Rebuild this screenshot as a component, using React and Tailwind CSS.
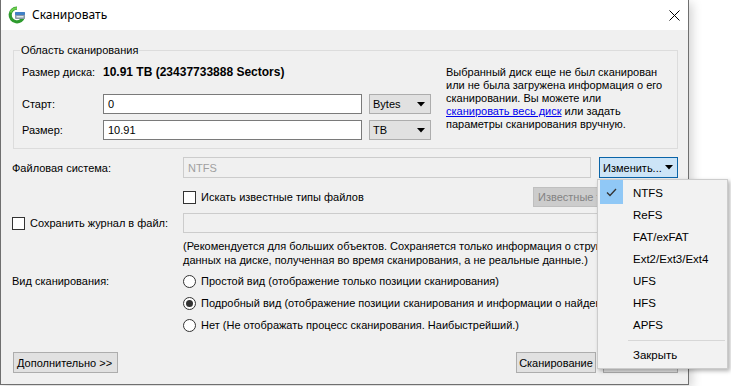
import React from "react";

function Arrow({ className = "" }) {
  return (
    <svg width="8" height="5" viewBox="0 0 8 5" className={className}>
      <path d="M0 0H8L4 4.5Z" fill="#000" />
    </svg>
  );
}

function Checkbox() {
  return <span className="inline-block w-[13px] h-[13px] border border-[#333333] bg-white shrink-0" />;
}

function Radio({ checked }) {
  return (
    <span className="w-[13px] h-[13px] rounded-full border border-[#333333] bg-white shrink-0 flex items-center justify-center">
      {checked && <span className="w-[7px] h-[7px] rounded-full bg-[#333333]" />}
    </span>
  );
}

function Btn({ children, className = "" }) {
  return (
    <div className={`h-[21px] border border-[#adadad] bg-[#e1e1e1] flex items-center justify-center ${className}`}>
      {children}
    </div>
  );
}

function AppIcon() {
  return (
    <svg width="18" height="18" viewBox="0 0 18 18">
      <path d="M9 2.2A6.8 6.8 0 1 0 15.6 10.5" fill="none" stroke="#2e9b2e" strokeWidth="3.2" />
      <path d="M9 2.2A6.8 6.8 0 0 0 2.6 6.5" fill="none" stroke="#6fcf4f" strokeWidth="2" />
      <rect x="7" y="6" width="10" height="7" rx="1" fill="#8a9aa8" />
      <rect x="7" y="6" width="10" height="3" rx="1" fill="#3f7fc6" />
      <rect x="8.5" y="10" width="7" height="1.5" fill="#dfe6ec" />
    </svg>
  );
}

const menuItems = ["NTFS", "ReFS", "FAT/exFAT", "Ext2/Ext3/Ext4", "UFS", "HFS", "APFS"];

export default function App() {
  return (
    <div className="relative w-[731px] h-[386px] bg-white overflow-hidden font-['Liberation_Sans',Arial,sans-serif] text-[11px] text-black leading-[14px]">
      <div className="w-[689px] h-[385px] border-x border-b border-[#6f6f6f] bg-[#f0f0f0] flex flex-col overflow-hidden shadow-[3px_3px_10px_rgba(0,0,0,0.18)]">
        {/* Title bar */}
        <div className="h-[30px] bg-white flex items-center pl-[7px] pr-[8px] shrink-0">
          <AppIcon />
          <span className="ml-[6px] text-[12px] font-['Noto_Sans',Arial,sans-serif]">Сканировать</span>
          <svg width="11" height="11" viewBox="0 0 11 11" className="ml-auto">
            <path d="M0.5 0.5L10.5 10.5M10.5 0.5L0.5 10.5" stroke="#000" strokeWidth="1" />
          </svg>
        </div>

        {/* Content */}
        <div className="flex flex-col pl-[11px] pr-[10px]">
          {/* Group box */}
          <div className="relative ml-[1px] mt-[20px] h-[99px] border border-[#dcdcdc] flex pl-[8px]">
            <span className="absolute left-[6px] top-[-8px] px-[1px] bg-[#f0f0f0] leading-[14px]">Область сканирования</span>
            <div className="flex flex-col w-[409px]">
              <div className="mt-[14px] h-[14px] flex items-center">
                <span className="w-[81px]">Размер диска:</span>
                <span className="font-bold text-[12px]">10.91 TB (23437733888 Sectors)</span>
              </div>
              <div className="mt-[15px] h-[20px] flex items-center">
                <span className="w-[81px]">Старт:</span>
                <div className="w-[259px] h-[20px] border border-[#7a7a7a] bg-white flex items-center pl-[4px]">0</div>
                <div className="ml-[7px] w-[62px] h-[20px] border border-[#adadad] bg-[#e1e1e1] flex items-center pl-[3px] pr-[5px]">
                  <span>Bytes</span>
                  <Arrow className="ml-auto" />
                </div>
              </div>
              <div className="mt-[6px] h-[20px] flex items-center">
                <span className="w-[81px]">Размер:</span>
                <div className="w-[259px] h-[20px] border border-[#7a7a7a] bg-white flex items-center pl-[4px]">10.91</div>
                <div className="ml-[7px] w-[62px] h-[20px] border border-[#adadad] bg-[#e1e1e1] flex items-center pl-[3px] pr-[5px]">
                  <span>TB</span>
                  <Arrow className="ml-auto" />
                </div>
              </div>
            </div>
            <div className="ml-[15px] mt-[15px] leading-[13px] whitespace-nowrap">
              <div>Выбранный диск еще не был сканирован</div>
              <div>или не была загружена информация о его</div>
              <div>сканировании. Вы можете или</div>
              <div>
                <span className="text-[#0000ee] underline">сканировать весь диск</span> или задать
              </div>
              <div>параметры сканирования вручную.</div>
            </div>
          </div>

          {/* File system row */}
          <div className="mt-[8px] h-[21px] flex items-center">
            <span className="w-[171px]">Файловая система:</span>
            <div className="w-[408px] h-[21px] border border-[#cccccc] bg-[#f0f0f0] text-[#a0a0a0] flex items-center pl-[4px]">NTFS</div>
            <div className="ml-auto w-[79px] h-[21px] border border-[#0a64a8] bg-[#cce4f7] flex items-center pl-[3px] pr-[4px]">
              <span>Изменить...</span>
              <Arrow className="ml-auto" />
            </div>
          </div>

          {/* Known types */}
          <div className="mt-[9px] h-[20px] flex items-center">
            <div className="ml-[171px] flex items-center gap-[5px]">
              <Checkbox />
              <span>Искать известные типы файлов</span>
            </div>
            <div className="ml-auto w-[145px] h-[20px] border border-[#bfbfbf] bg-[#cccccc] text-[#838383] flex items-center pl-[4px]">
              Известные типы файлов...
            </div>
          </div>

          {/* Log file */}
          <div className="mt-[6px] h-[20px] flex items-center">
            <div className="w-[171px] flex items-center gap-[5px]">
              <Checkbox />
              <span>Сохранить журнал в файл:</span>
            </div>
            <div className="flex-1 h-[20px] border border-[#cccccc] bg-[#f0f0f0]" />
          </div>

          {/* Note */}
          <div className="mt-[6px] ml-[171px] whitespace-nowrap leading-[14px]">
            <div>(Рекомендуется для больших объектов. Сохраняется только информация о структуре</div>
            <div>данных на диске, полученная во время сканирования, а не реальные данные.)</div>
          </div>

          {/* Scan view */}
          <div className="mt-[3px] flex">
            <div className="w-[171px] h-[22px] flex items-center">Вид сканирования:</div>
            <div className="flex flex-col whitespace-nowrap">
              <div className="h-[22px] flex items-center gap-[5px]">
                <Radio />
                <span>Простой вид (отображение только позиции сканирования)</span>
              </div>
              <div className="h-[22px] flex items-center gap-[5px]">
                <Radio checked />
                <span>Подробный вид (отображение позиции сканирования и информации о найденных объектах)</span>
              </div>
              <div className="h-[22px] flex items-center gap-[5px]">
                <Radio />
                <span>Нет (Не отображать процесс сканирования. Наибыстрейший.)</span>
              </div>
            </div>
          </div>

          {/* Buttons */}
          <div className="mt-[16px] flex items-center">
            <Btn className="ml-[1px] w-[105px] justify-start pl-[3px]">Дополнительно &gt;&gt;</Btn>
            <Btn className="ml-auto w-[80px]">Сканирование</Btn>
            <Btn className="ml-[7px] w-[75px]">Отмена</Btn>
          </div>
        </div>
      </div>

      {/* Dropdown menu */}
      <div className="absolute left-[597px] top-[179px] w-[131px] h-[190px] bg-[#f2f2f2] border border-[#cccccc] shadow-[2px_2px_4px_rgba(0,0,0,0.3)] pt-[2px] text-[11.5px]">
        {menuItems.map((it, i) => (
          <div key={it} className="relative h-[22px] flex items-center pl-[35px]">
            {i === 0 && (
              <div className="absolute left-[2px] top-[-2px] w-[23px] h-[24px] bg-[#90c8f6] flex items-center justify-center">
                <svg width="11" height="9" viewBox="0 0 11 9">
                  <path d="M1 4.5L4 7.5L10 1" fill="none" stroke="#333" strokeWidth="1.3" />
                </svg>
              </div>
            )}
            <span>{it}</span>
          </div>
        ))}
        <div className="mt-[4px] ml-[30px] mr-[2px] h-px bg-[#d7d7d7]" />
        <div className="mt-[3px] h-[22px] flex items-center pl-[35px]">Закрыть</div>
      </div>
    </div>
  );
}
